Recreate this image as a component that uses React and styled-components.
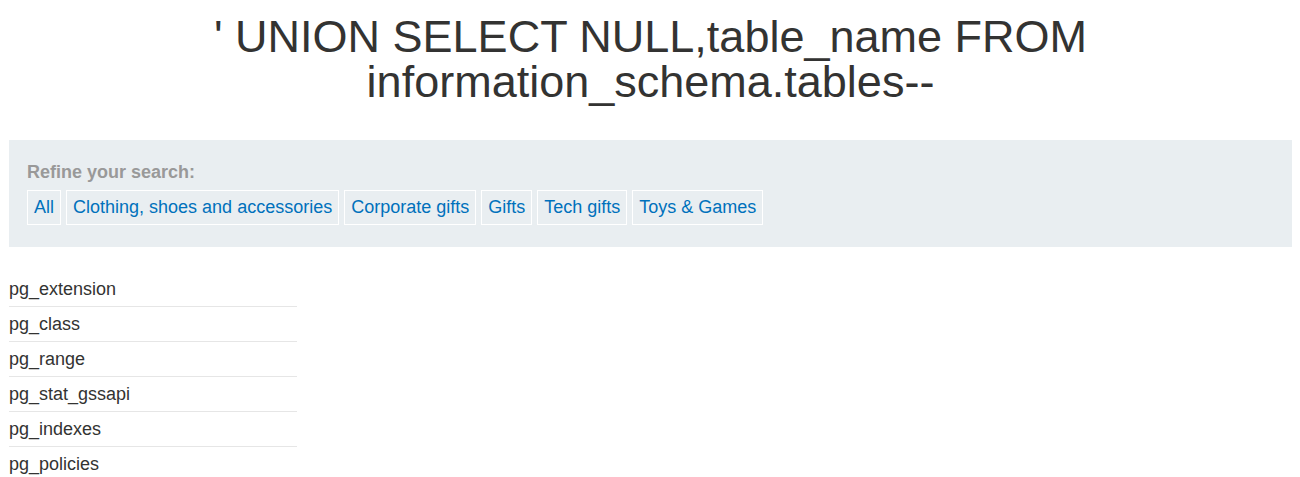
import React from "react";
import styled, { createGlobalStyle } from "styled-components";

const Global = createGlobalStyle`
  html, body { margin: 0; padding: 0; background: #fff; }
  body { font-family: Arial, "Liberation Sans", Helvetica, sans-serif; color: #333332; }
`;

const Page = styled.div`
  padding: 0 8px 0 9px;
`;

const Title = styled.h1`
  margin: 0;
  padding-top: 14px;
  font-size: 45px;
  line-height: 45px;
  font-weight: 400;
  text-align: center;
  color: #333332;
`;

const Filter = styled.section`
  margin-top: 36px;
  background: #e9eef1;
  padding: 21px 18px 20px 18px;
  height: 107px;
  box-sizing: border-box;
`;

const Label = styled.div`
  font-size: 18px;
  font-weight: 700;
  color: #999999;
  line-height: 22px;
  margin-bottom: 7px;
`;

const Buttons = styled.div`
  display: flex;
  flex-wrap: wrap;
  gap: 5px;
`;

const FilterButton = styled.a`
  display: block;
  border: 1px solid #ffffff;
  padding: 0 6px;
  height: 35px;
  box-sizing: border-box;
  line-height: 33px;
  font-size: 18px;
  color: #0071bc;
  text-decoration: none;
`;

const List = styled.ul`
  list-style: none;
  margin: 25px 0 0 0;
  padding: 0;
  width: 288px;
`;

const Row = styled.li`
  font-size: 18px;
  line-height: 34px;
  color: #333332;
  border-bottom: 1px solid #e6e6e6;
  &:last-child { border-bottom: none; }
`;

const categories = [
  "All",
  "Clothing, shoes and accessories",
  "Corporate gifts",
  "Gifts",
  "Tech gifts",
  "Toys & Games",
];

const tables = [
  "pg_extension",
  "pg_class",
  "pg_range",
  "pg_stat_gssapi",
  "pg_indexes",
  "pg_policies",
];

export default function App() {
  return (
    <>
      <Global />
      <Page>
        <Title>
          ' UNION SELECT NULL,table_name FROM information_schema.tables--
        </Title>
        <Filter>
          <Label>Refine your search:</Label>
          <Buttons>
            {categories.map((c) => (
              <FilterButton key={c} href="#">
                {c}
              </FilterButton>
            ))}
          </Buttons>
        </Filter>
        <List>
          {tables.map((t) => (
            <Row key={t}>{t}</Row>
          ))}
        </List>
      </Page>
    </>
  );
}
